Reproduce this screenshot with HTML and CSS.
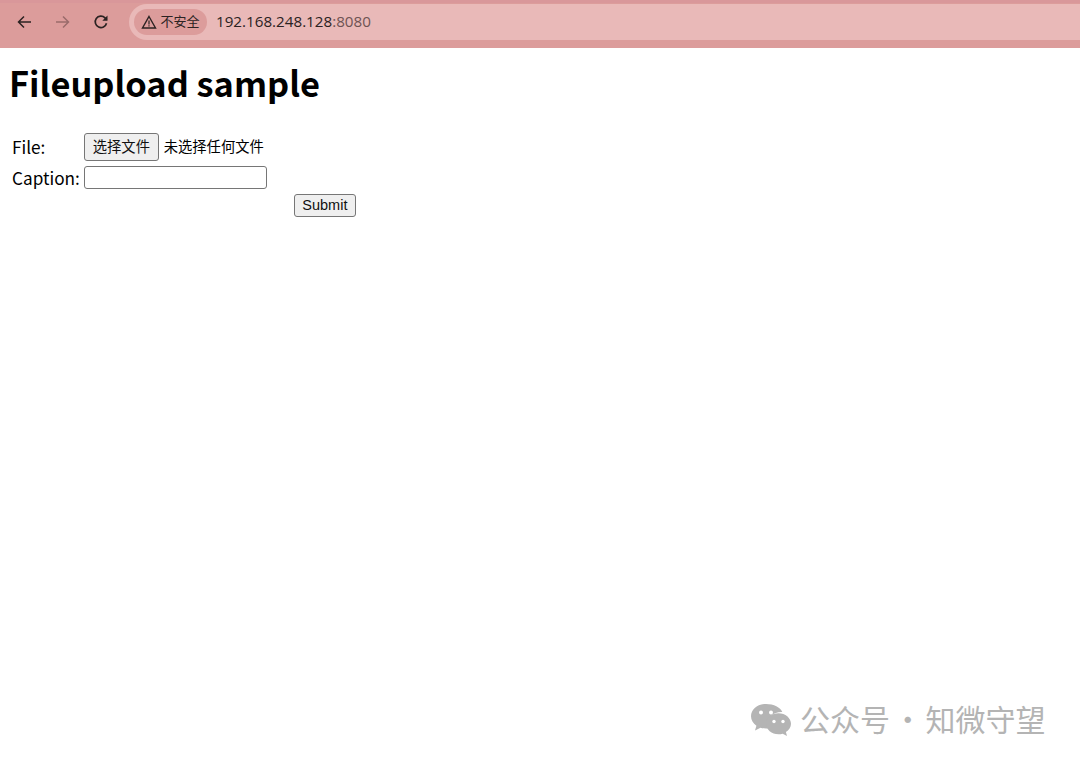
FILE: index.html
```html
<!DOCTYPE html>
<html lang="zh-CN">
<head>
    <meta charset="UTF-8">
    <title>Fileupload sample</title>
    <link rel="stylesheet" href="styles.css">
</head>
<body>
    <div class="toolbar">
        <div class="nav-icons">
            <svg class="nav-icon" width="16" height="16" viewBox="0 0 16 16"><path d="M15 8H2.500M8 2.500 2.500 8 8 13.500" fill="none" stroke="#2b2222" stroke-width="1.5"/></svg>
            <svg class="nav-icon" width="16" height="16" viewBox="0 0 16 16"><path d="M1 8h12.500M8 2.500 13.500 8 8 13.500" fill="none" stroke="#9a6b6b" stroke-width="1.5"/></svg>
            <svg class="nav-icon" width="16" height="16" viewBox="0 0 16 16"><path d="M13.500 9.200A5.700 5.700 0 1 1 12 3.800L13.800 5.600" fill="none" stroke="#2b2222" stroke-width="1.7"/><path d="M14.500 1.500v5.200H9.300z" fill="#2b2222"/></svg>
        </div>
        <div class="omnibox">
            <div class="security-chip">
                <svg width="16" height="14" viewBox="0 0 16 14"><path d="M8 1.500 14.500 13h-13z" fill="none" stroke="#2b2222" stroke-width="1.400"/><path d="M8 5.500v4M8 10.300v1.300" stroke="#2b2222" stroke-width="1.200"/></svg>
                <span class="security-text">不安全</span>
            </div>
            <div class="url">192.168.248.128<span class="url-port">:8080</span></div>
        </div>
    </div>

    <div class="page">
        <h1>Fileupload sample</h1>
        <form class="upload-form">
            <table class="form-table">
                <tr>
                    <td>File:</td>
                    <td class="control-cell">
                        <button type="button" class="file-button">选择文件</button>
                        <span class="file-name">未选择任何文件</span>
                    </td>
                    <td></td>
                </tr>
                <tr>
                    <td>Caption:</td>
                    <td class="control-cell"><input type="text" class="caption-input"></td>
                    <td></td>
                </tr>
                <tr>
                    <td></td>
                    <td></td>
                    <td class="submit-cell"><button type="submit" class="submit-button">Submit</button></td>
                </tr>
            </table>
        </form>
    </div>

    <div class="watermark">
        <svg width="42" height="34" viewBox="0 0 42 34">
            <path d="M16 1C7.700 1 1 6.500 1 13.300c0 3.800 2.100 7.100 5.400 9.400L5 27.500l5.500-2.800c1.700.5 3.500.8 5.500.8.700 0 1.400 0 2-.1-.5-1.300-.7-2.700-.7-4.100 0-6.900 6.300-12.300 14-12.300h1C30.400 4.300 23.800 1 16 1z" fill="#b4b4b4"/>
            <path d="M41 20.800c0-5.800-5.700-10.500-12.500-10.500S16 15 16 20.800s5.700 10.500 12.500 10.500c1.500 0 2.900-.2 4.200-.6l4.300 2.300-1.100-3.900c3-1.900 5.100-4.900 5.100-8.300z" fill="#b4b4b4"/>
            <circle cx="11" cy="9.500" r="2" fill="#fff"/><circle cx="21" cy="9.500" r="2" fill="#fff"/>
            <circle cx="24" cy="18.500" r="1.700" fill="#fff"/><circle cx="33" cy="18.500" r="1.700" fill="#fff"/>
        </svg>
        <span class="watermark-text">公众号 · 知微守望</span>
    </div>
</body>
</html>
```

FILE: styles.css
```css
body {
    margin: 0;
    height: 764px;
    overflow: hidden;
    position: relative;
    background-color: #fff;
    font-family: "Noto Sans CJK SC", "Noto Sans", sans-serif;
    color: #000;
}

.toolbar {
    height: 48px;
    box-sizing: border-box;
    background-color: #dc9c9b;
    border-top: 3px solid #d9979a;
    display: flex;
    align-items: flex-start;
    padding-top: 1px;
}

.nav-icons {
    width: 129px;
    padding-left: 16px;
    box-sizing: border-box;
    display: flex;
    gap: 22.5px;
    padding-top: 10px;
}

.omnibox {
    flex: 1;
    height: 36px;
    background-color: #e9b9b8;
    border-radius: 18px 0 0 18px;
    display: flex;
    align-items: center;
    padding-left: 5px;
}

.security-chip {
    height: 26px;
    width: 73px;
    background-color: #dc9c9b;
    border-radius: 13px;
    display: flex;
    align-items: center;
    justify-content: center;
    gap: 3px;
    font-size: 13px;
    color: #2b2222;
}

.security-text {
    line-height: 24px;
    margin-bottom: 2px;
}

.url {
    margin-left: 9px;
    margin-bottom: 2px;
    font-family: "Open Sans", "Noto Sans", sans-serif;
    font-size: 15.2px;
    color: #2b2222;
}

.url-port {
    color: #6e5353;
}

.page {
    padding: 0 9px;
}

h1 {
    margin: 13px 0 0;
    font-size: 34.4px;
    line-height: 43px;
    font-weight: 700;
}

.upload-form {
    margin-top: 25px;
}

.form-table {
    border-spacing: 2px;
    font-size: 17.2px;
}

.form-table td {
    padding: 1px;
    line-height: 25px;
}

.file-button {
    height: 28px;
    width: 75px;
    padding: 0 0 2px;
    font-family: inherit;
    font-size: 14.3px;
    background-color: #efefef;
    border: 1px solid #767676;
    border-radius: 3px;
    color: #111;
}

.file-name {
    font-size: 14.3px;
    margin-left: 1px;
}

.control-cell {
    width: 206px;
}

.caption-input {
    display: block;
    width: 183px;
    height: 23px;
    box-sizing: border-box;
    border: 1px solid #767676;
    border-radius: 3px;
    padding: 1px 2px;
}

.submit-button {
    display: block;
    height: 23px;
    width: 62px;
    padding: 0;
    font-family: "Liberation Sans", Arial, sans-serif;
    font-size: 14.5px;
    background-color: #efefef;
    border: 1px solid #767676;
    border-radius: 3px;
    color: #111;
}

.watermark {
    position: absolute;
    left: 750px;
    top: 700px;
    display: flex;
    align-items: center;
    gap: 8px;
    font-size: 30px;
    color: #b4b4b4;
}

.watermark-text {
    word-spacing: -4px;
    margin-top: -4px;
}
```
